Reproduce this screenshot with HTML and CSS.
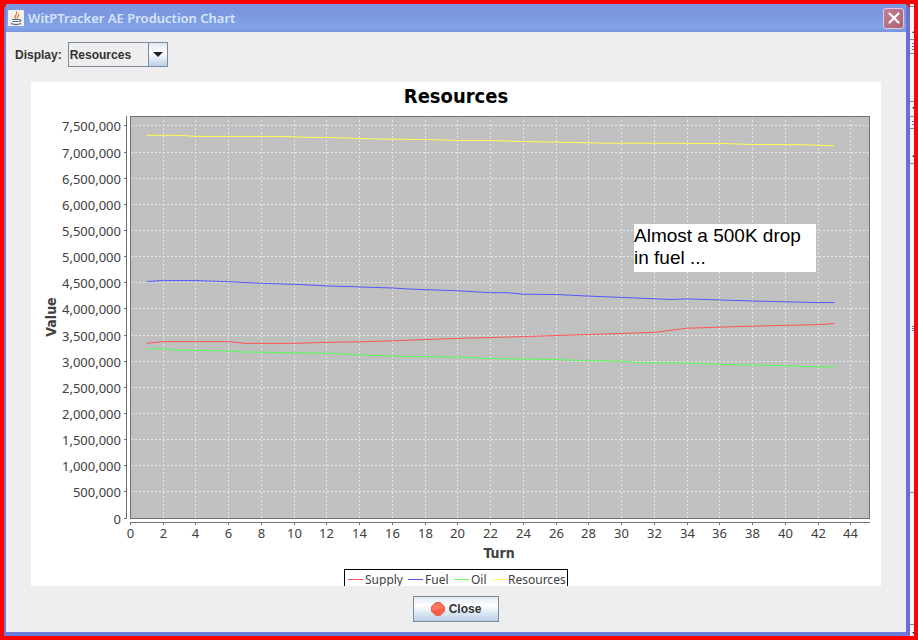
FILE: index.html
```
<!DOCTYPE html>
<html lang="en">
  <head>
    <meta charset="utf-8">
    <meta name="viewport" content="width=device-width, initial-scale=1.0">
    <title>WitPTracker AE Production Chart</title>
    <link rel="stylesheet" href="styles.css">
  </head>
  <body>
    <main class="window">
      <header class="titlebar">
        <svg class="java" width="16" height="16" viewBox="0 0 16 16" aria-hidden="true">
          <rect width="16" height="16" rx="1" fill="#f4f1ec"/>
          <path d="M8 8.500C4.500 6 10.500 5 8.500 1.500M9.500 8.500C8 7 12 6 10.500 4" fill="none" stroke="#e0702c" stroke-width="1.200"/>
          <path d="M4 9.500h7.500M4.500 11.500h6M11.500 9.500c2.500 0 1.500 2-.500 2M3 13.500c3 1.300 7 1.300 10 0" fill="none" stroke="#4a6a8c" stroke-width="1.100"/>
        </svg>
        <h1 class="caption">WitPTracker AE Production Chart</h1>
        <button class="close-x" type="button" aria-label="Close window">
          <svg width="12" height="12" viewBox="0 0 12 12"><path d="M1.500 1.500l9 9M10.500 1.500l-9 9" stroke="#fff" stroke-width="2.200" stroke-linecap="round"/></svg>
        </button>
      </header>
      <div class="content">
        <div class="toolbar">
          <label for="display">Display:</label>
          <div class="combo">
            <select id="display">
              <option>Resources</option>
            </select>
            <span class="combo-arrow"></span>
          </div>
        </div>
        <svg class="chart" id="chart" viewBox="0 0 850 504" role="img" aria-label="Resources by turn">
          <text class="chart-title" x="425" y="21">Resources</text>
          <rect class="plot" x="99.5" y="34.5" width="739" height="402"/>
          <g id="grid"></g>
          <g id="axes"></g>
          <g id="series"></g>
          <text class="axis-title" x="468" y="476">Turn</text>
          <text class="axis-title" transform="translate(25 235) rotate(-90)">Value</text>
          <rect class="legend" x="313.500" y="487.500" width="223" height="24"/>
          <g id="legend"></g>
          <rect class="note" x="603" y="142" width="182" height="48"/>
          <text class="note-text" x="603" y="160">Almost a 500K drop</text>
          <text class="note-text" x="603" y="182">in fuel ...</text>
        </svg>
        <div class="buttons">
          <button class="close" type="button">
            <svg width="14" height="14" viewBox="0 0 14 14" aria-hidden="true">
              <path d="M4.800.500h4.400l4.300 4.300v4.400l-4.300 4.300H4.800L.500 9.200V4.800z" fill="#fb5f44" stroke="#dc6a58" stroke-linejoin="round"/>
              <path d="M5 1.500h4l3.500 3.500v1.500C9 6 6 8.500 1.500 8V5z" fill="#ff9a80" opacity=".4"/>
            </svg>
            Close
          </button>
        </div>
      </div>
    </main>
    <!-- sliver of the scroll bars in the window underneath -->
    <aside class="behind" aria-hidden="true">
      <svg width="4" height="632" viewBox="0 0 4 632">
        <path d="M0 2.500h4M0 35.500h4M0 49.500h4M0 97.500h4M0 112.500h4M0 124.500h4M0 159.500h4M0 488.500h4M0 620.500h4" stroke="#8088a0"/>
        <path d="M2 39.500h2M2 42.500h2M2 45.500h2M2 117.500h2M2 120.500h2M2 322.500h2M2 324.500h2M2 326.500h2" stroke="#6a74a8"/>
        <path d="M2 29l2-2v2zM2 103h2v2zM2 153l2-2v2zM2 628h2v2z" fill="#222"/>
      </svg>
    </aside>
    <script src="chart.js"></script>
  </body>
</html>
```

FILE: styles.css
```
* { box-sizing: border-box }

:root {
  --panel: #eeeeee;
  --frame: #6b7cd8;
  --edge: #7a8a99;
  --ui: "Liberation Sans", Arial, sans-serif;
  --chart: "Noto Sans", "Open Sans", sans-serif;
  --chart-bold: "DejaVu Sans Condensed", "DejaVu Sans", sans-serif;
}

body {
  display: flex;
  min-height: 100vh;
  margin: 0;
  border: 4px solid #ff0000;
  background: #ff0000;
  font: bold 12px/16px var(--ui);
  color: #333333;
}

.window {
  display: flex;
  flex: 1;
  flex-direction: column;
  border: solid var(--frame);
  border-width: 0 4px 4px 2px;
  border-right-color: #6b70d4;
  border-radius: 6px 6px 0 0;
  background: var(--panel);
}

.titlebar {
  display: flex;
  align-items: center;
  height: 28px;
  padding: 0 2px;
  gap: 4px;
  background: linear-gradient(#7d95e0, #7b98e0 40%, #82a5e8 85%, #7a93dc);
}

.caption {
  flex: 1;
  margin: 0;
  font: 600 13px/16px "Noto Sans", sans-serif;
  color: #d8e4f8;
}

.close-x {
  display: grid;
  place-items: center;
  width: 21px;
  height: 21px;
  padding: 0;
  border: 1px solid #e0c8e8;
  border-radius: 3px;
  background: linear-gradient(135deg, #c08098, #b06070);
}

.content {
  display: flex;
  flex: 1;
  flex-direction: column;
}

.toolbar {
  display: flex;
  align-items: center;
  gap: 6px;
  padding: 10px 9px 15px;
}

.combo { position: relative }

.combo select {
  display: block;
  width: 100px;
  height: 25px;
  padding: 0 2px 0 1px;
  appearance: none;
  border: 1px solid var(--edge);
  border-radius: 0;
  background: var(--panel);
  font: inherit;
  color: inherit;
}

.combo-arrow {
  position: absolute;
  inset: 1px 1px 1px auto;
  display: grid;
  place-items: center;
  width: 19px;
  border-left: 1px solid var(--edge);
  background: linear-gradient(#dfe9f2, #ffffff 45%, #b8cfe5);
  pointer-events: none;
}

.combo-arrow::after {
  content: "";
  border: 5px solid transparent;
  border-top-color: #222222;
  border-bottom: 0;
}

.chart {
  display: block;
  margin: 0 25px;
  background: #ffffff;
  font: 12px var(--chart);
  fill: #404040;
}

.chart-title {
  font: bold 20px var(--chart-bold);
  fill: #000000;
  text-anchor: middle;
}

.axis-title {
  font: bold 14px var(--chart-bold);
  text-anchor: middle;
}

.plot { fill: #c0c0c0; stroke: #707070 }

.grid-line {
  stroke: #e6e6e6;
  stroke-dasharray: 2 2;
}

.axis-line { fill: none; stroke: #707070 }
.tick-x { font-size: 13px; text-anchor: middle }
.tick-y { font-size: 13px; text-anchor: end }

.series { fill: none }
.supply { stroke: #ff5555 }
.fuel { stroke: #5555ff }
.oil { stroke: #55ff55 }
.resources { stroke: #ffff55 }

.legend { fill: #ffffff; stroke: #000000 }
.note { fill: #ffffff }
.note-text { font: 19px var(--ui); fill: #000000 }

.buttons {
  display: flex;
  justify-content: center;
  padding: 10px 0;
}

.close {
  display: flex;
  align-items: center;
  justify-content: center;
  gap: 4px;
  width: 86px;
  height: 26px;
  padding: 0;
  border: 1px solid var(--edge);
  background: linear-gradient(#dfe9f2, #ffffff 35%, #b8cfe5);
  font: inherit;
  color: inherit;
}

.behind {
  width: 4px;
  background: #f2f4fa;
}

.behind svg { display: block }
```

FILE: chart.js
```
const NS = 'http://www.w3.org/2000/svg'
const plot = { left: 99.5, right: 838, top: 35, bottom: 436 }

const px = turn => plot.left + turn * 16.37
const py = millions => plot.bottom - millions * 52.28

// [turn, value in millions]
const data = {
  supply: [[1, 3.34], [2, 3.375], [6, 3.375], [7, 3.34], [10, 3.34], [12, 3.36], [14, 3.37], [16, 3.39], [20, 3.435], [24, 3.47], [28, 3.51], [32, 3.55], [34, 3.63], [38, 3.67], [42, 3.7], [43, 3.72]],
  fuel: [[1, 4.525], [2, 4.54], [4, 4.54], [6, 4.52], [8, 4.49], [10, 4.47], [12, 4.44], [16, 4.4], [17, 4.38], [20, 4.345], [22, 4.31], [23, 4.31], [24, 4.28], [26, 4.275], [28, 4.245], [30, 4.22], [33, 4.18], [34, 4.19], [38, 4.15], [42, 4.12], [43, 4.12]],
  oil: [[1, 3.24], [2, 3.235], [3, 3.21], [5, 3.205], [7, 3.175], [9, 3.165], [12, 3.15], [14, 3.12], [17, 3.09], [20, 3.08], [22, 3.05], [26, 3.03], [28, 3.01], [30, 3], [31, 2.97], [34, 2.965], [36, 2.94], [39, 2.92], [42, 2.89], [43, 2.89]],
  resources: [[1, 7.32], [3, 7.32], [4, 7.3], [9, 7.3], [11, 7.28], [12, 7.28], [15, 7.25], [18, 7.24], [20, 7.22], [22, 7.22], [24, 7.2], [26, 7.19], [29, 7.17], [36, 7.165], [38, 7.145], [41, 7.14], [43, 7.12]]
}

function add (parent, name, attrs, text) {
  const el = document.createElementNS(NS, name)
  for (const key in attrs) el.setAttribute(key, attrs[key])
  if (text !== undefined) el.textContent = text
  document.getElementById(parent).append(el)
}

function line (parent, cls, x1, y1, x2, y2) {
  add(parent, 'line', { class: cls, x1, y1, x2, y2 })
}

line('axes', 'axis-line', 95.5, 34, 95.5, 437)
line('axes', 'axis-line', 99, 440.5, 839, 440.5)

for (let turn = 0; turn <= 44; turn += 2) {
  const x = Math.floor(px(turn)) + 0.5
  if (turn) line('grid', 'grid-line', x, plot.bottom, x, plot.top)
  line('axes', 'axis-line', x, 441, x, 443)
  add('axes', 'text', { class: 'tick-x', x, y: 456 }, turn)
}

for (let value = 0; value <= 7.5; value += 0.5) {
  const y = Math.floor(py(value)) + 0.5
  if (value) line('grid', 'grid-line', 100, y, plot.right, y)
  line('axes', 'axis-line', 93, y, 95, y)
  add('axes', 'text', { class: 'tick-y', x: 90, y: y + 5 }, (value * 1e6).toLocaleString('en-US'))
}

for (const name in data) {
  const points = data[name].map(([turn, value]) => px(turn).toFixed(1) + ',' + py(value).toFixed(1))
  add('series', 'polyline', { class: 'series ' + name, points: points.join(' ') })
}

const legend = [['Supply', 317, 334], ['Fuel', 377, 394], ['Oil', 423, 440], ['Resources', 461, 477]]
for (const [label, x, textX] of legend) {
  line('legend', label.toLowerCase(), x, 497.5, x + 15, 497.5)
  add('legend', 'text', { x: textX, y: 502 }, label)
}
```
